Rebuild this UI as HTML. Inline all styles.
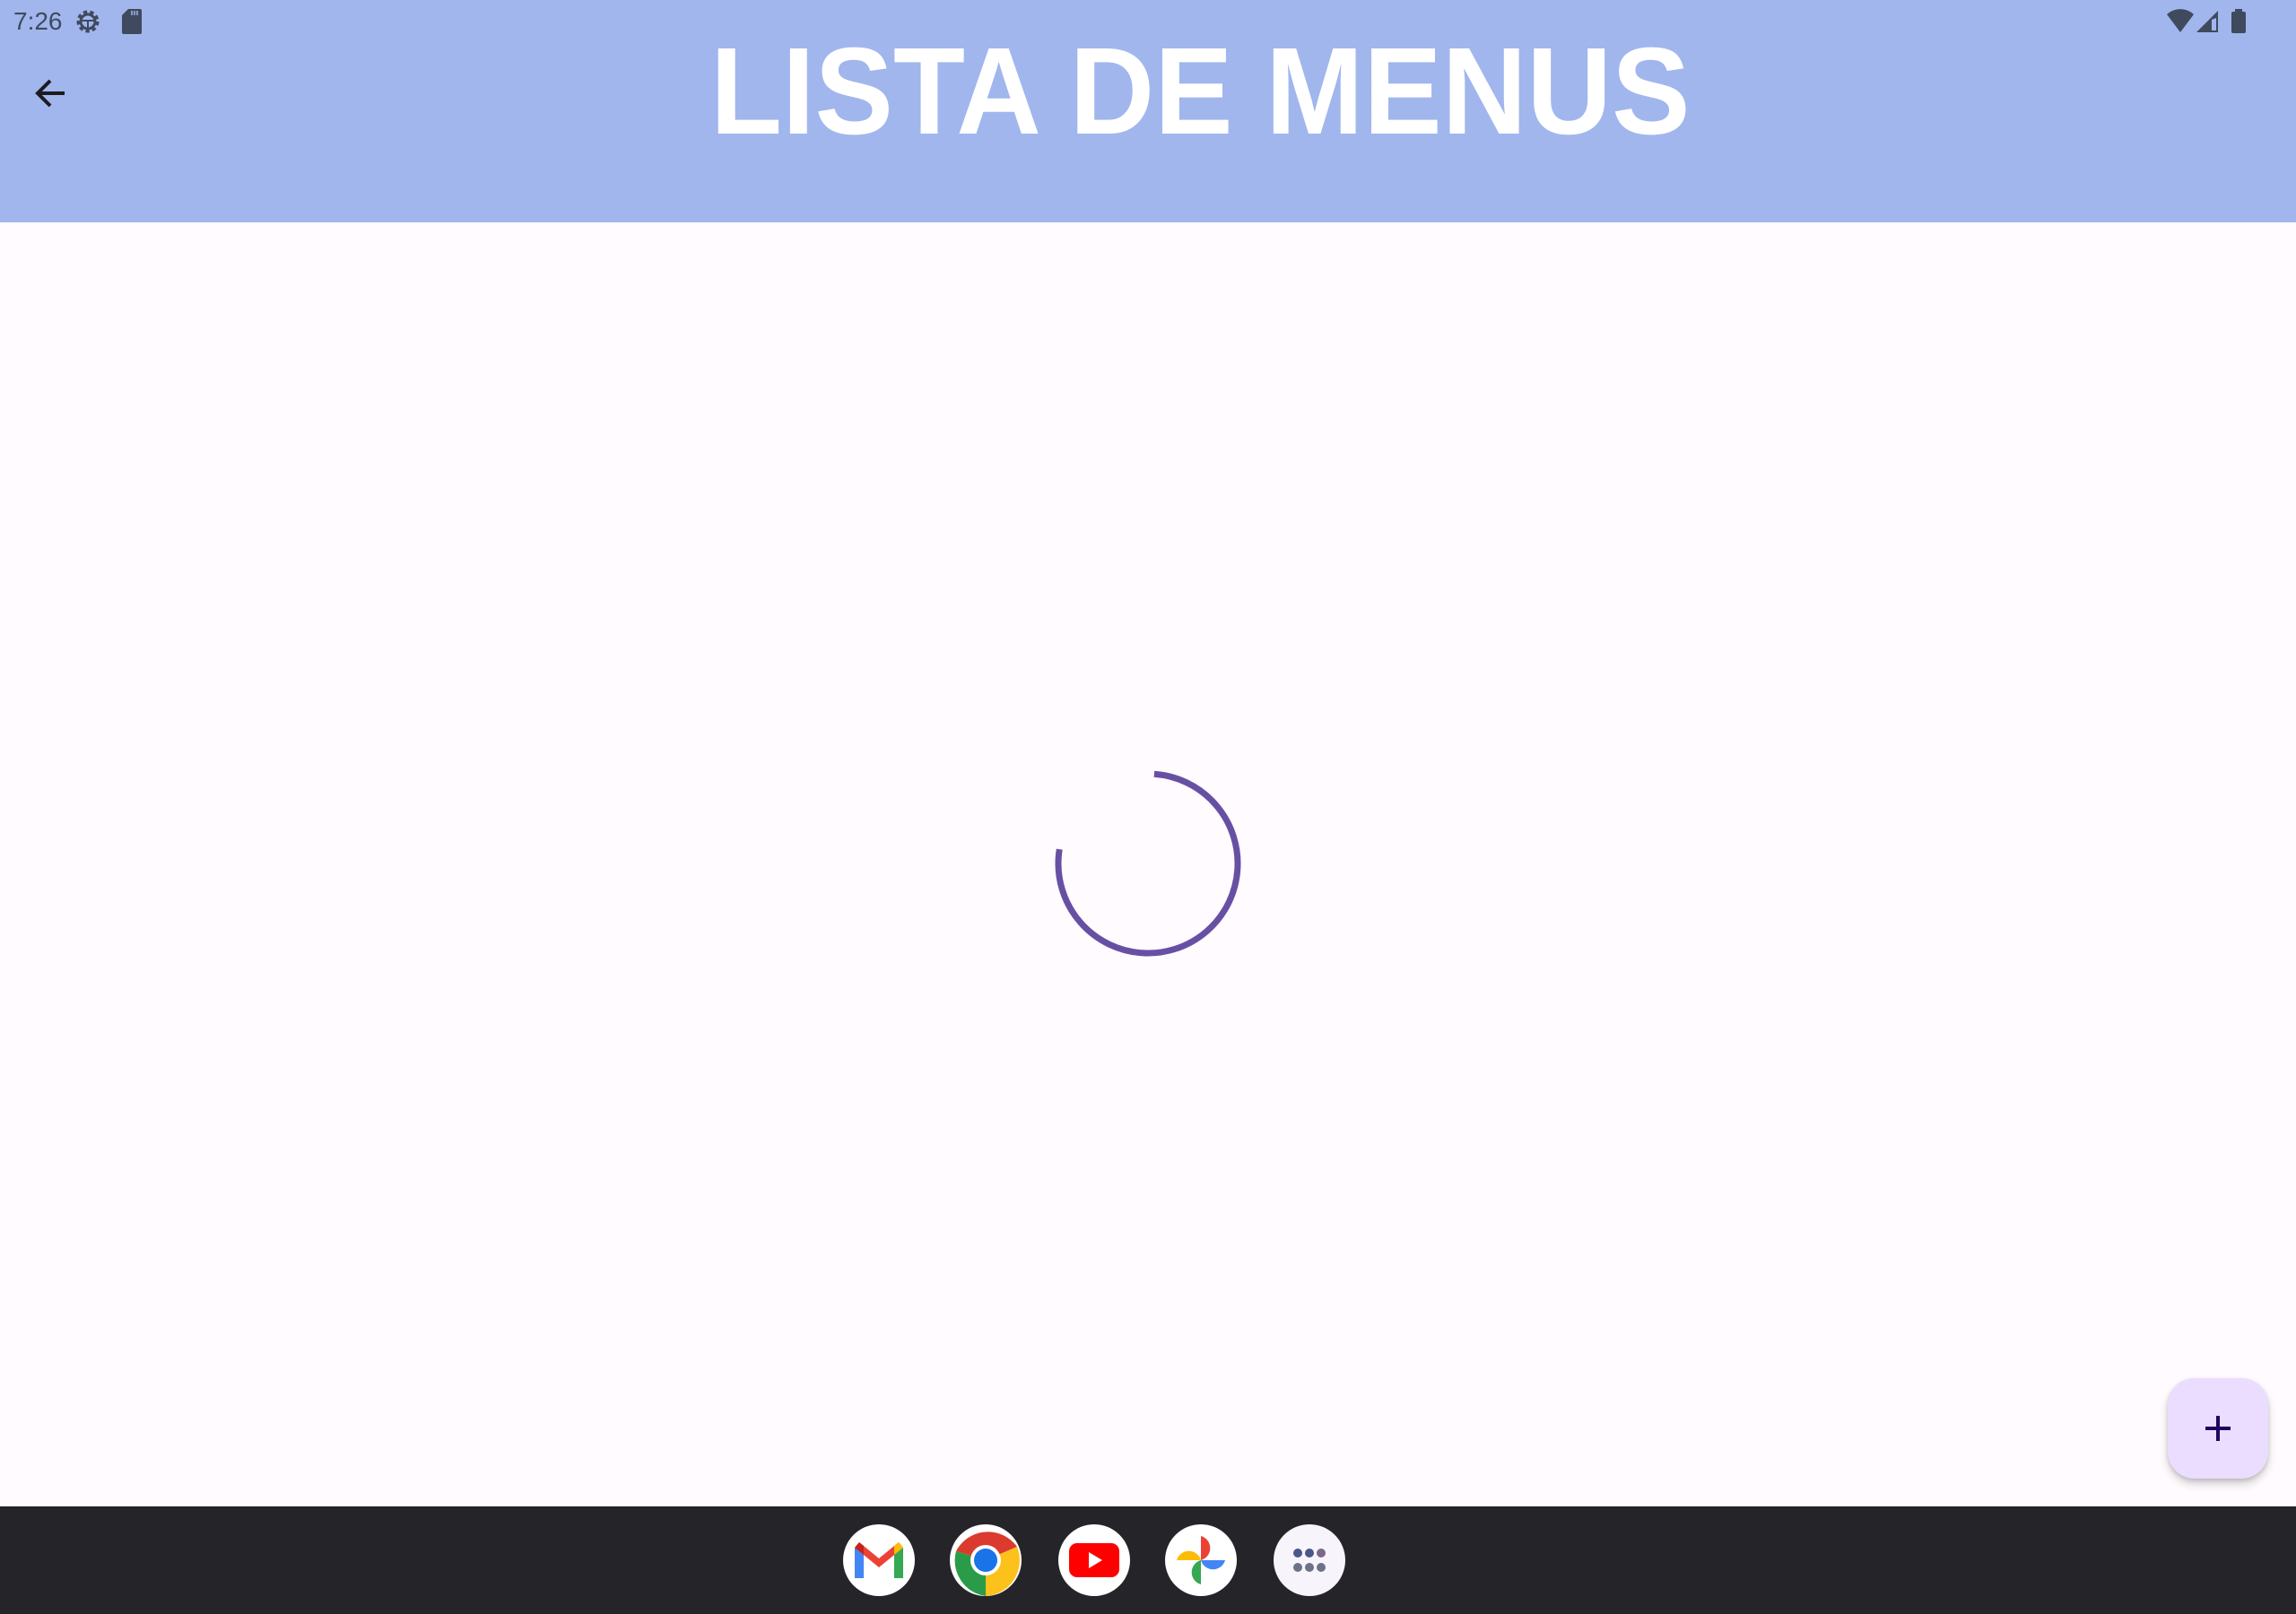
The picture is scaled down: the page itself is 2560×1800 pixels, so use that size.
<!DOCTYPE html>
<html><head><meta charset="utf-8"><style>
html,body{margin:0;padding:0;width:2560px;height:1800px;overflow:hidden;background:#fffbfe;font-family:"Liberation Sans",sans-serif;position:relative}
.hdr{position:absolute;left:0;top:0;width:2560px;height:248px;background:#a1b6ed}
.title{position:absolute;left:792px;top:27px;width:1100px;height:140px;color:#fff;font-weight:bold;font-size:138px;line-height:150px;white-space:nowrap;transform-origin:0 0;transform:scaleX(0.95)}
.time{position:absolute;left:15px;top:8px;font-size:28px;color:#404a5e;line-height:32px}
.nav{position:absolute;left:0;top:1680px;width:2560px;height:120px;background:#252429}
.ic{position:absolute;top:1700px;width:80px;height:80px;border-radius:50%;background:#fff;overflow:hidden}
.fab{position:absolute;left:2417px;top:1537px;width:112px;height:112px;border-radius:30px;background:#eaddff;box-shadow:0 6px 10px rgba(0,0,0,.18),0 2px 4px rgba(0,0,0,.12)}
</style></head><body>
<div class="hdr"></div>
<div class="time">7:26</div>
<svg style="position:absolute;left:80px;top:8px" width="36" height="32" viewBox="0 0 36 32"><circle cx="18" cy="16" r="10" fill="none" stroke="#404a5e" stroke-width="5" stroke-dasharray="4 3"/><circle cx="18" cy="16" r="8" fill="none" stroke="#404a5e" stroke-width="3"/><path d="M11 15h14M18 15v8" stroke="#404a5e" stroke-width="2"/></svg>
<svg style="position:absolute;left:136px;top:10px" width="22" height="28" viewBox="0 0 22 28"><path d="M7 0h13a2 2 0 0 1 2 2v24a2 2 0 0 1-2 2H2a2 2 0 0 1-2-2V7z" fill="#404a5e"/><path d="M11 2v5M14 2v5M17 2v5" stroke="#a1b6ed" stroke-width="1.5"/></svg>
<svg style="position:absolute;left:2414px;top:10px" width="100" height="28" viewBox="0 0 100 28"><path d="M2 6a22 22 0 0 1 30 0L17 26z" fill="#404a5e"/><path d="M35 26L59 2v24z" fill="#404a5e"/><path d="M52 12v12h5V10z" fill="#a1b6ed"/><rect x="74" y="3" width="16" height="24" rx="2" fill="#404a5e"/><rect x="78" y="0" width="8" height="4" fill="#404a5e"/></svg>
<svg style="position:absolute;left:36px;top:84px" width="40" height="40" viewBox="0 0 40 40"><path d="M36 20H7M20 6L6 20l14 14" fill="none" stroke="#1c1b1f" stroke-width="4"/></svg>
<div class="title">LISTA DE MENUS</div>
<svg style="position:absolute;left:1170px;top:853px" width="220" height="220" viewBox="0 0 220 220"><circle cx="110" cy="110" r="100" fill="none" stroke="#6750a4" stroke-width="7" stroke-dasharray="480 148" transform="rotate(-86 110 110)"/></svg>
<div class="fab"><svg width="112" height="112" viewBox="0 0 112 112"><path d="M56 42v28M42 56h28" stroke="#21005d" stroke-width="4"/></svg></div>
<div class="nav"></div>
<div class="ic" style="left:940px"><svg width="80" height="80" viewBox="0 0 80 80"><path d="M13 26v34h10V34z" fill="#4285f4"/><path d="M57 34v26h10V26z" fill="#34a853"/><path d="M13 26l27 22 27-22-5-6-22 18-22-18z" fill="#ea4335"/><path d="M13 26l5-6 5 4v10z" fill="#c5221f"/><path d="M67 26l-5-6-5 4v10z" fill="#fbbc04"/></svg></div>
<div class="ic" style="left:1059px"><svg width="80" height="80" viewBox="0 0 80 80"><path d="M40 40L7 30A40 40 0 0 1 75 25z" fill="#db3a2e"/><path d="M40 40L75 25A40 40 0 0 1 40 80z" fill="#fcc11b"/><path d="M40 40L40 80A40 40 0 0 1 7 30z" fill="#2a9c49"/><circle cx="40" cy="40" r="17" fill="#fff"/><circle cx="40" cy="40" r="13" fill="#1a73e8"/></svg></div>
<div class="ic" style="left:1180px"><svg width="80" height="80" viewBox="0 0 80 80"><rect x="12" y="21" width="56" height="38" rx="9" fill="#f00"/><path d="M34 31v18l15-9z" fill="#fff"/></svg></div>
<div class="ic" style="left:1299px"><svg width="80" height="80" viewBox="0 0 80 80"><path d="M40 40V13a14 14 0 0 1 0 27z" fill="#ea4335"/><path d="M40 40h27a14 14 0 0 1-27 0z" fill="#4285f4"/><path d="M40 40v27a14 14 0 0 1 0-27z" fill="#34a853"/><path d="M40 40H13a14 14 0 0 1 27 0z" fill="#fbbc04"/></svg></div>
<div class="ic" style="left:1420px;background:#f7f5fb"><svg width="80" height="80" viewBox="0 0 80 80"><circle cx="27" cy="32" r="5" fill="#49578a"/><circle cx="40" cy="32" r="5" fill="#49578a"/><circle cx="53" cy="32" r="5" fill="#7a6789"/><circle cx="27" cy="48" r="5" fill="#6e7287"/><circle cx="40" cy="48" r="5" fill="#6e7287"/><circle cx="53" cy="48" r="5" fill="#6e7287"/></svg></div>
</body></html>
